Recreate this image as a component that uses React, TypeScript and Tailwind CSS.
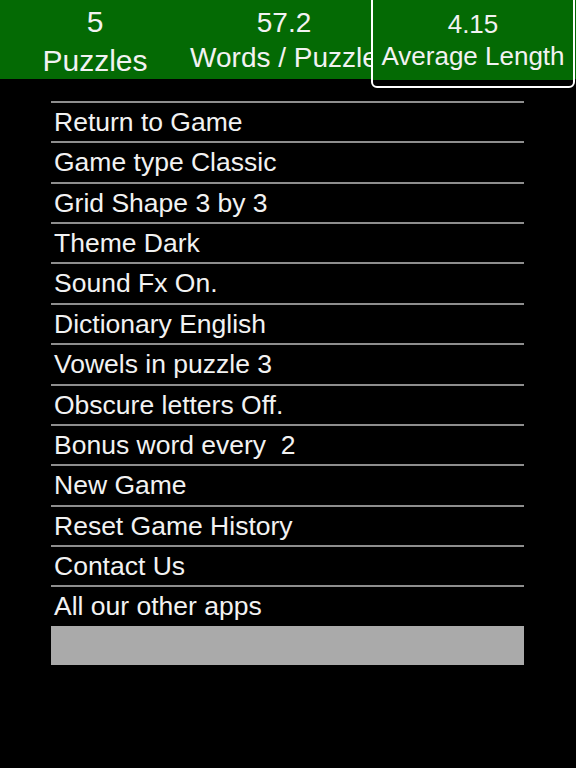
import React from 'react';

const menuItems = [
  'Return to Game',
  'Game type Classic',
  'Grid Shape 3 by 3',
  'Theme Dark',
  'Sound Fx On.',
  'Dictionary English',
  'Vowels in puzzle 3',
  'Obscure letters Off.',
  'Bonus word every  2',
  'New Game',
  'Reset Game History',
  'Contact Us',
  'All our other apps',
];

export default function App() {
  return (
    <div
      className="w-[576px] h-[768px] bg-black text-[#f2f2f2] overflow-hidden"
      style={{ fontFamily: '"Liberation Sans", Arial, sans-serif' }}
    >
      {/* Stats header */}
      <div className="flex items-start h-[79px] bg-[#046a04]">
        <div className="w-[190px] shrink-0 pt-[2px] text-center text-[30px] leading-[39px]">
          <div>5</div>
          <div>Puzzles</div>
        </div>
        <div className="w-[188px] shrink-0 pt-[5px] text-center text-[28px] leading-[35px] whitespace-nowrap">
          <div>57.2</div>
          <div>Words / Puzzle</div>
        </div>
        <div className="relative z-10 -ml-[7px] -mt-[2px] w-[204px] h-[90px] shrink-0 border-2 border-white rounded-b-[6px] bg-black overflow-hidden">
          <div className="h-[80px] bg-[#046a04] pt-[8px] text-center text-[26px] leading-[32px] whitespace-nowrap">
            <div>4.15</div>
            <div>Average Length</div>
          </div>
        </div>
      </div>

      {/* Settings menu */}
      <div className="mt-[22px] ml-[51px] w-[473px]">
        {menuItems.map((item) => (
          <div
            key={item}
            className="h-[40.36px] border-t-2 border-[#8e8e8e] pl-[3px] pt-[1px] text-[26.5px] leading-[37px] whitespace-pre"
          >
            {item}
          </div>
        ))}
        <div className="h-[39px] bg-[#aaaaaa]" />
      </div>
    </div>
  );
}
